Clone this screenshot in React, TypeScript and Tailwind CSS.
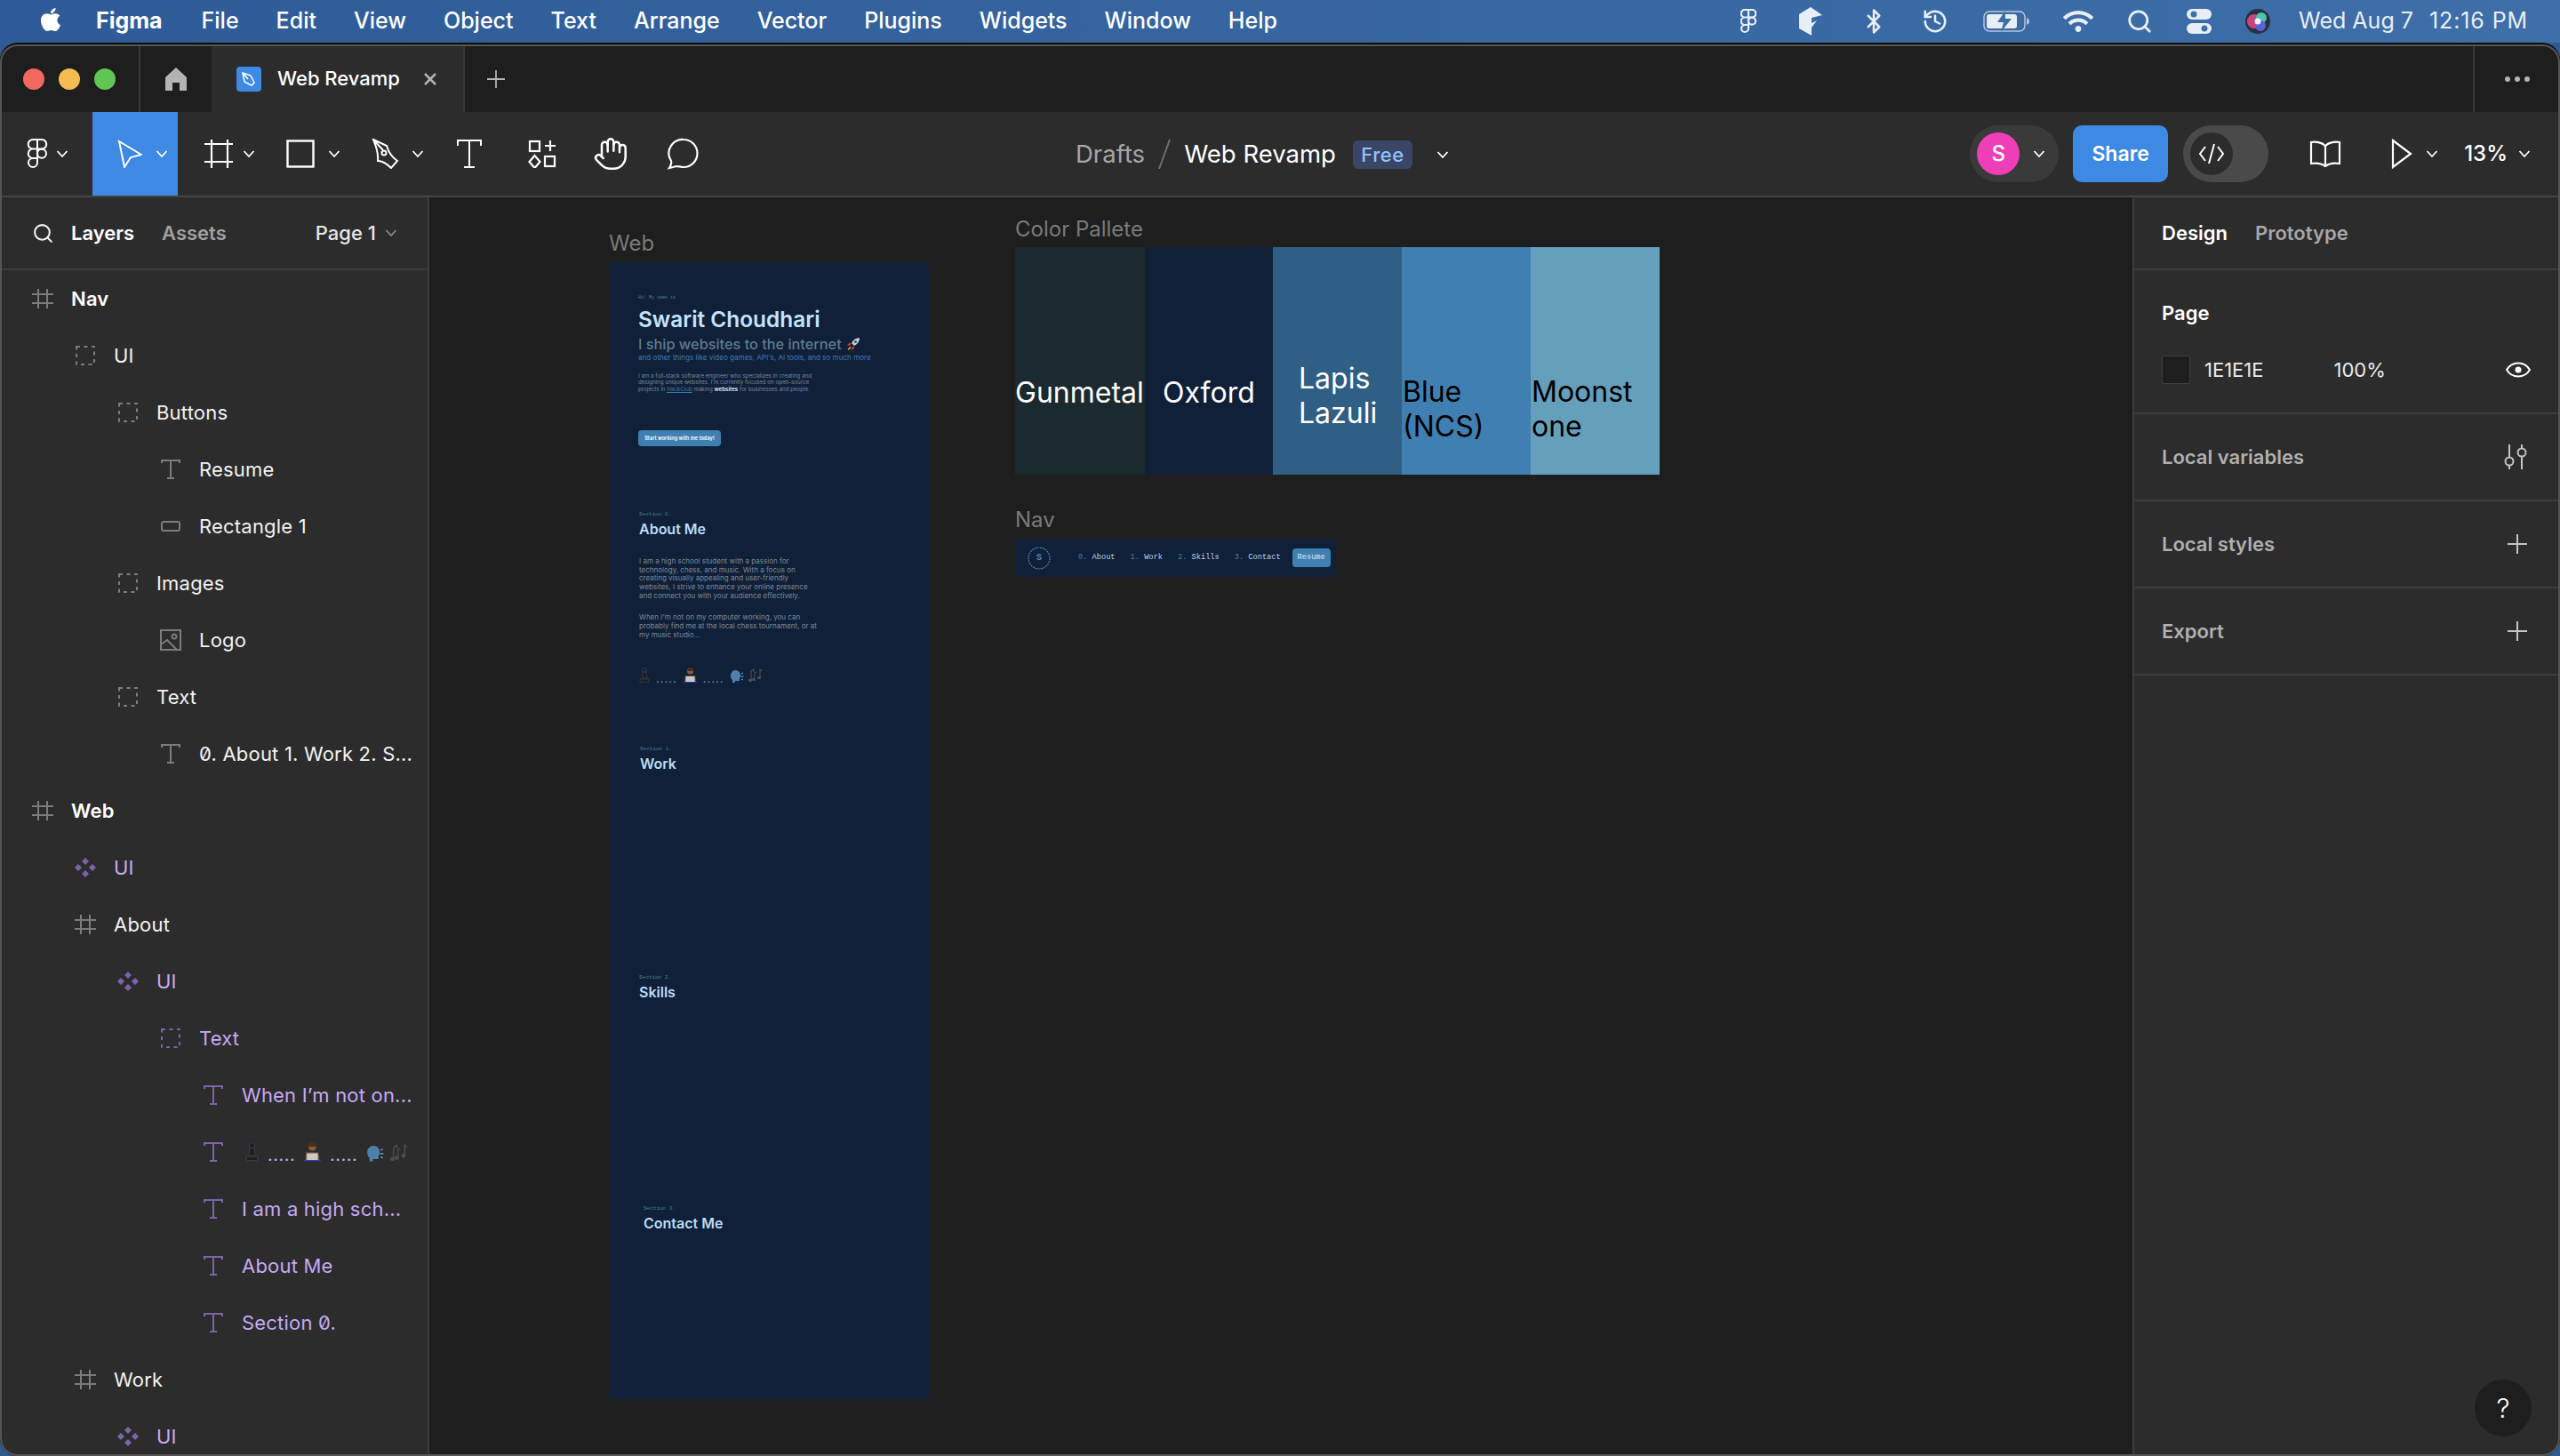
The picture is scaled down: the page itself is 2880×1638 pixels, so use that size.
import { Bluetooth, Hand, History, Search } from 'lucide-react';
import { FaApple, FaWifi } from 'react-icons/fa';

const INTER = "font-[family-name:Inter,sans-serif]";
const MONO = "font-[family-name:'Liberation_Mono',monospace]";

const MENUS = ['File', 'Edit', 'View', 'Object', 'Text', 'Arrange', 'Vector', 'Plugins', 'Widgets', 'Window', 'Help'];

type LayerIcon = 'frame' | 'group' | 'text' | 'rect' | 'image' | 'component';
type Layer = { depth: number; icon: LayerIcon; label?: string; tone?: 'bold' | 'purple'; emoji?: boolean };

const LAYERS: Layer[] = [
  { depth: 0, icon: 'frame', label: 'Nav', tone: 'bold' },
  { depth: 1, icon: 'group', label: 'UI' },
  { depth: 2, icon: 'group', label: 'Buttons' },
  { depth: 3, icon: 'text', label: 'Resume' },
  { depth: 3, icon: 'rect', label: 'Rectangle 1' },
  { depth: 2, icon: 'group', label: 'Images' },
  { depth: 3, icon: 'image', label: 'Logo' },
  { depth: 2, icon: 'group', label: 'Text' },
  { depth: 3, icon: 'text', label: '0. About 1. Work 2. S...' },
  { depth: 0, icon: 'frame', label: 'Web', tone: 'bold' },
  { depth: 1, icon: 'component', label: 'UI', tone: 'purple' },
  { depth: 1, icon: 'frame', label: 'About' },
  { depth: 2, icon: 'component', label: 'UI', tone: 'purple' },
  { depth: 3, icon: 'group', label: 'Text', tone: 'purple' },
  { depth: 4, icon: 'text', label: 'When I’m not on...', tone: 'purple' },
  { depth: 4, icon: 'text', tone: 'purple', emoji: true },
  { depth: 4, icon: 'text', label: 'I am a high sch...', tone: 'purple' },
  { depth: 4, icon: 'text', label: 'About Me', tone: 'purple' },
  { depth: 4, icon: 'text', label: 'Section 0.', tone: 'purple' },
  { depth: 1, icon: 'frame', label: 'Work' },
  { depth: 2, icon: 'component', label: 'UI', tone: 'purple' },
];

const Chevron = ({ color = '#fff', className = '' }: { color?: string; className?: string }) => (
  <svg width="14" height="10" viewBox="0 0 14 10" fill="none" className={className}>
    <path d="M1.5 2 7 8l5.5-6" stroke={color} strokeWidth="1.8" />
  </svg>
);

const Plus = ({ size = 22, color = '#c4c4c4' }: { size?: number; color?: string }) => (
  <svg width={size} height={size} viewBox="0 0 22 22" fill="none">
    <path d="M11 0v22M0 11h22" stroke={color} strokeWidth="2" />
  </svg>
);

function LayerGlyph({ icon, purple }: { icon: LayerIcon; purple: boolean }) {
  const c = purple ? '#7d63a8' : '#7c7c7c';
  if (icon === 'frame')
    return (
      <svg width="24" height="22" viewBox="0 0 24 22" fill="none" stroke={c} strokeWidth="2">
        <path d="M7 0v22M17 0v22M0 6h24M0 16h24" />
      </svg>
    );
  if (icon === 'group')
    return (
      <svg width="22" height="22" viewBox="0 0 22 22" fill="none" stroke={c} strokeWidth="2" strokeDasharray="4 4.5">
        <rect x="1" y="1" width="20" height="20" />
      </svg>
    );
  if (icon === 'text')
    return (
      <svg width="22" height="22" viewBox="0 0 22 22" fill="none" stroke={c} strokeWidth="2">
        <path d="M1 4V1h20v3M11 1v20M7 21h8" />
      </svg>
    );
  if (icon === 'rect')
    return (
      <svg width="22" height="12" viewBox="0 0 22 12" fill="none" stroke={c} strokeWidth="2">
        <rect x="1" y="1" width="20" height="10" rx="2" />
      </svg>
    );
  if (icon === 'image')
    return (
      <svg width="24" height="24" viewBox="0 0 24 24" fill="none" stroke={c} strokeWidth="2">
        <rect x="1" y="1" width="22" height="22" />
        <circle cx="16" cy="8" r="2.5" />
        <path d="M1 17l7-5 11 11" />
      </svg>
    );
  return (
    <svg width="24" height="22" viewBox="0 0 24 22" fill={c}>
      <path d="M12 0l4 4-4 4-4-4zM12 14l4 4-4 4-4-4zM4 7l4 4-4 4-4-4zM20 7l4 4-4 4-4-4z" />
    </svg>
  );
}

const Pawn = ({ s }: { s: number }) => (
  <svg width={12 * s} height={17 * s} viewBox="0 0 12 17" fill="#1c2024" stroke="#4a4f55" strokeWidth="0.5">
    <circle cx="6" cy="3" r="2.5" />
    <path d="M4 5h4l1 7H3zM1 13h10v3.5H1z" />
  </svg>
);

const Coder = ({ s }: { s: number }) => (
  <svg width={15 * s} height={17 * s} viewBox="0 0 15 17">
    <circle cx="7.5" cy="4" r="3.6" fill="#8a5a3a" />
    <path d="M3.5 4a4 4 0 0 1 8 0z" fill="#4a2f20" />
    <path d="M2 9h11l1 7H1z" fill="#7a5238" />
    <rect x="2.5" y="10" width="10" height="6" fill="#c9c9c9" />
    <rect x="0" y="16" width="15" height="1" fill="#2b3fb5" />
  </svg>
);

const Speaker = ({ s }: { s: number }) => (
  <svg width={16 * s} height={14 * s} viewBox="0 0 16 14">
    <path d="M1 6a5.5 5.5 0 0 1 11-1l.5 3-1.500 .5V12H6v2H3v-3C1.500 10 1 8 1 6z" fill="#4f80ad" />
    <path d="M13 4l2-1M13 7h2.500M13 10l2 1" stroke="#8fb2cf" strokeWidth="1" />
  </svg>
);

const Notes = ({ s }: { s: number }) => (
  <svg width={16 * s} height={16 * s} viewBox="0 0 16 16" fill="none" stroke="#4a5058" strokeWidth="1.100">
    <path d="M3 13V3l3-2v3M7 12V5l2-1" />
    <ellipse cx="2" cy="13.500" rx="1.500" ry="1.200" fill="#4a5058" />
    <ellipse cx="6" cy="12.500" rx="1.500" ry="1.200" fill="#4a5058" />
    <path d="M13 10V1l2 2" />
    <ellipse cx="12" cy="10.500" rx="1.500" ry="1.200" fill="#4a5058" />
  </svg>
);

const Rocket = () => (
  <svg width="16" height="16" viewBox="0 0 16 16" className="ml-[5px]">
    <path d="M15 1c-4 0-7 2-9 6l3 3c4-2 6-5 6-9z" fill="#c9ced6" />
    <circle cx="10.500" cy="5.500" r="1.500" fill="#35506e" />
    <path d="M6 7H3L1 9.500l3 .5zM9 10v3l-2.500 2-.5-3z" fill="#c8382f" />
    <path d="M4.500 11C3 12 2 13.500 1.500 15c1.500-.5 3-1.500 4-3z" fill="#f3b62f" />
  </svg>
);

function EmojiLine({ s, dots }: { s: number; dots: string }) {
  return (
    <div className="flex items-end">
      <Pawn s={s} />
      <span className={dots}>.....</span>
      <Coder s={s} />
      <span className={dots}>.....</span>
      <Speaker s={s} />
      <span style={{ width: 5 * s }} />
      <Notes s={s} />
    </div>
  );
}

function LayerRow({ layer }: { layer: Layer }) {
  const purple = layer.tone === 'purple';
  const color = purple ? 'text-[#c5a9f3]' : 'text-[#f2f2f2]';
  return (
    <div className="flex h-[64px] shrink-0 items-center" style={{ paddingLeft: 32 + layer.depth * 48 }}>
      <span className="flex w-[32px] shrink-0 justify-center">
        <LayerGlyph icon={layer.icon} purple={purple} />
      </span>
      {layer.emoji ? (
        <span className="ml-[20px]">
          <EmojiLine s={1.25} dots="mx-[10px] text-[20px] leading-[16px] tracking-[0.5px] text-[#c5a9f3]" />
        </span>
      ) : (
        <span
          className={`ml-[16px] whitespace-nowrap text-[22px] tracking-[0.2px] slashed-zero ${color} ${
            layer.tone === 'bold' ? 'font-semibold text-white' : ''
          }`}
        >
          {layer.label}
        </span>
      )}
    </div>
  );
}

function FrameSection({ n, title, className }: { n: number; title: string; className: string }) {
  return (
    <div className={className}>
      <p className={`${MONO} h-[8px] text-[6px] leading-[8px] slashed-zero text-[#4d7c9c]`}>Section {n}.</p>
      <p className="mt-[2px] h-[20px] text-[16px] font-semibold leading-[20px] text-[#bcdcf5]">{title}</p>
    </div>
  );
}

function WebFrame() {
  return (
    <div className={`absolute left-[202px] top-[73px] flex h-[1279px] w-[360px] flex-col bg-[#0f2038] ${INTER}`}>
      <div className="pl-[33px] pt-[36px]">
        <p className={`${MONO} h-[8px] text-[5px] leading-[8px] text-[#4d7c9c]`}>Hi! My name is</p>
        <p className="mt-[6px] h-[28px] text-[24.400px] font-semibold leading-[28px] text-[#c5e3ff]">Swarit Choudhari</p>
        <div className="mt-[5px] flex h-[18px] items-center whitespace-nowrap text-[16.300px] font-medium leading-[18px] text-[#607a91]">
          I ship websites to the internet
          <Rocket />
        </div>
        <p className="h-[12px] whitespace-nowrap text-[8.100px] leading-[12px] text-[#4377b0]">
          and other things like video games, API's, AI tools, and so much more
        </p>
        <p className="mt-[11px] w-[200px] text-[6.2px] leading-[7.3px] text-[#7c8999]">
          I am a full-stack software engineer who specializes in creating and designing unique websites. I'm currently
          focused on open-source projects in <span className="text-[#3f7fb1] underline">HackClub</span> making{' '}
          <span className="font-semibold text-[#e4eef6]">websites</span> for businesses and people.
        </p>
        <div className="mt-[43px] flex h-[18px] w-[93px] items-center justify-center rounded-[4px] bg-[#3f7fb1] text-[5.600px] font-bold text-[#e8f2fa]">
          Start working with me today!
        </div>
      </div>

      <div className="pl-[34px]">
        <FrameSection n={0} title="About Me" className="mt-[73px]" />
        <p className="mt-[22px] w-[230px] text-[8px] leading-[9.7px] text-[#7c8999]">
          I am a high school student with a passion for
          <br />
          technology, chess, and music. With a focus on
          <br />
          creating visually appealing and user-friendly
          <br />
          websites, I strive to enhance your online presence
          <br />
          and connect you with your audience effectively.
        </p>
        <p className="mt-[15px] w-[230px] text-[8px] leading-[9.7px] text-[#7c8999]">
          When I'm not on my computer working, you can
          <br />
          probably find me at the local chess tournament, or at
          <br />
          my music studio...
        </p>
        <div className="mt-[31px]">
          <EmojiLine s={1} dots="mx-[7px] text-[13px] leading-[10px] tracking-[1px] text-[#7c8999]" />
        </div>
      </div>

      <FrameSection n={1} title="Work" className="mt-[71px] pl-[35px]" />
      <FrameSection n={2} title="Skills" className="mt-[227px] pl-[34px]" />
      <FrameSection n={3} title="Contact Me" className="mt-[230px] pl-[39px]" />
    </div>
  );
}

function NavFrame() {
  const items: [string, string][] = [
    ['0.', 'About'],
    ['1.', 'Work'],
    ['2.', 'Skills'],
    ['3.', 'Contact'],
  ];
  return (
    <div className={`absolute left-[659px] top-[384px] flex h-[43px] w-[360px] items-center bg-[#0f2038] pl-[14px] ${MONO}`}>
      <div className="relative mr-[14px] flex h-[26px] w-[26px] items-center justify-center text-[10px] font-bold text-[#4f86b0]">
        <svg width="26" height="26" viewBox="0 0 26 26" fill="none" className="absolute inset-0">
          <circle cx="13" cy="13" r="12" stroke="#4f86b0" strokeWidth="1.200" strokeDasharray="2 1" />
        </svg>
        S
      </div>
      {items.map(([num, label]) => (
        <span key={num} className="ml-[17px] whitespace-nowrap text-[8.670px] slashed-zero text-[#b5d3e8]">
          <span className="text-[#3f7fb1]">{num}</span> {label}
        </span>
      ))}
      <span className="ml-[13px] flex h-[21px] w-[43px] items-center justify-center rounded-[4px] bg-[#3f7fb1] text-[8.670px] text-[#dcecf7]">
        Resume
      </span>
    </div>
  );
}

function Palette() {
  return (
    <div className={`absolute left-[659px] top-[56px] flex h-[256px] w-[725px] text-[32px] leading-[39px] ${INTER}`}>
      <div className="h-full w-[146px] bg-[#1b2a2f] pt-[144px] text-white">Gunmetal</div>
      <div className="h-full w-[144px] bg-[#0f2038] pl-[20px] pt-[144px] text-white">Oxford</div>
      <div className="h-full w-[145px] bg-[#2f5f85] pl-[29px] pt-[128px] text-white">
        Lapis
        <br />
        Lazuli
      </div>
      <div className="h-full w-[145px] bg-[#3f7fb1] pl-[1px] pt-[143px] text-black">
        Blue
        <br />
        (NCS)
      </div>
      <div className="h-full w-[145px] bg-[#659fbc] pl-[1px] pt-[143px] text-black">
        Moonst
        <br />
        one
      </div>
    </div>
  );
}

function MenuBar() {
  return (
    <div className="flex h-[48px] shrink-0 items-center bg-gradient-to-r from-[#2e5b97] to-[#3e6fa9] pl-[42px] pr-[36px] text-[25px] text-white">
      <FaApple size={30} className="mb-[4px]" />
      <span className="ml-[36px] font-bold">Figma</span>
      <div className="ml-[44px] flex gap-[42px] font-medium">
        {MENUS.map((m) => (
          <span key={m}>{m}</span>
        ))}
      </div>
      <div className="ml-auto flex items-center text-[#e8eef6]">
        <svg width="18" height="28" viewBox="0 0 18 28" fill="none" stroke="currentColor" strokeWidth="2.200">
          <path d="M9 1H5a4 4 0 0 0 0 8.500h4zM9 1h4a4 4 0 0 1 0 8.500H9zM9 9.500H5a4 4 0 0 0 0 8.500h4zM9 18H5a4 4 0 1 0 4 4z" />
          <circle cx="13" cy="13.700" r="4" />
        </svg>
        <svg width="28" height="32" viewBox="0 0 28 32" className="ml-[47px]" fill="currentColor">
          <path d="M1 8 14 0l13 9-12 3v6l6-3-6 8v9L1 24z" />
        </svg>
        <Bluetooth size={30} strokeWidth={2} className="ml-[42px]" />
        <History size={30} strokeWidth={2} className="ml-[39px]" />
        <svg width="52" height="24" viewBox="0 0 52 24" className="ml-[39px]" fill="none">
          <rect x="1" y="1" width="46" height="22" rx="6" stroke="currentColor" strokeWidth="1.500" opacity="0.7" />
          <rect x="4" y="4" width="34" height="16" rx="3" fill="currentColor" />
          <path d="M25 0l-9 13h7l-3 11 12-15h-7z" fill="#3e6fa9" />
          <path d="M49 8v8c2-1 3-2 3-4s-1-3-3-4z" fill="currentColor" opacity="0.7" />
        </svg>
        <FaWifi size={34} className="ml-[38px]" />
        <Search size={30} strokeWidth={2.200} className="ml-[37px]" />
        <svg width="28" height="28" viewBox="0 0 28 28" className="ml-[38px]">
          <rect x="0" y="0" width="28" height="12" rx="6" fill="currentColor" />
          <circle cx="8" cy="6" r="3.500" fill="#3e6fa9" />
          <rect x="0" y="16" width="28" height="12" rx="6" fill="currentColor" />
          <circle cx="20" cy="22" r="3.500" fill="#3e6fa9" />
        </svg>
        <svg width="28" height="28" viewBox="0 0 28 28" className="ml-[38px]">
          <circle cx="14" cy="14" r="14" fill="#28323f" />
          <circle cx="10" cy="14" r="8" fill="#c9447e" />
          <circle cx="18" cy="10" r="6" fill="#4ec3b0" />
          <circle cx="17" cy="19" r="6" fill="#5b62d6" />
          <circle cx="14" cy="14" r="3.500" fill="#f2f2f2" />
        </svg>
        <span className="ml-[32px] whitespace-nowrap">Wed Aug 7</span>
        <span className="ml-[18px] whitespace-nowrap tracking-[0.9px]">12:16 PM</span>
      </div>
    </div>
  );
}

function TabBar() {
  return (
    <div className="flex h-[76px] shrink-0 items-stretch bg-[#1e1e1e] pt-[1px]">
      <div className="flex w-[158px] items-center gap-[16px] border-r-2 border-[#383838] pl-[26px]">
        <span className="h-[24px] w-[24px] rounded-full bg-[#f0695f]" />
        <span className="h-[24px] w-[24px] rounded-full bg-[#f5bd4f]" />
        <span className="h-[24px] w-[24px] rounded-full bg-[#61c554]" />
      </div>
      <div className="flex w-[80px] items-center justify-center">
        <svg width="26" height="26" viewBox="0 0 26 26" fill="#b3b3b3">
          <path d="M13 0 25 11v15h-8v-9H9v9H1V11z" />
        </svg>
      </div>
      <div className="flex w-[285px] items-center border-r-2 border-[#383838] bg-[#2c2c2c] pl-[28px]">
        <span className="flex h-[28px] w-[28px] items-center justify-center rounded-[4px] bg-[#3d89e3]">
          <svg width="18" height="18" viewBox="0 0 18 18" fill="none" stroke="#fff" strokeWidth="1.500">
            <path d="M2 2l9 3 4 8-3 3-8-4zM2 2l6 7" />
          </svg>
        </span>
        <span className="ml-[18px] whitespace-nowrap text-[22px] font-medium text-white">Web Revamp</span>
        <svg width="16" height="16" viewBox="0 0 16 16" className="ml-[26px]" stroke="#b3b3b3" strokeWidth="2.500">
          <path d="M2 2l12 12M14 2 2 14" />
        </svg>
      </div>
      <div className="ml-[25px] flex items-center">
        <Plus size={20} color="#b3b3b3" />
      </div>
      <div className="ml-auto flex w-[98px] items-center justify-center gap-[5px] border-l-2 border-[#383838]">
        <span className="h-[6px] w-[6px] rounded-full bg-[#b3b3b3]" />
        <span className="h-[6px] w-[6px] rounded-full bg-[#b3b3b3]" />
        <span className="h-[6px] w-[6px] rounded-full bg-[#b3b3b3]" />
      </div>
    </div>
  );
}

function Toolbar() {
  return (
    <div className="relative flex h-[96px] shrink-0 items-stretch border-b-2 border-[#444] bg-[#2c2c2c]">
      <div className="flex items-center pl-[30px]">
        <svg width="24" height="34" viewBox="0 0 24 34" fill="none" stroke="#fff" strokeWidth="2">
          <path d="M12 1H7a5 5 0 0 0 0 10.500h5zM12 1h5a5 5 0 0 1 0 10.500h-5zM12 11.500H7a5 5 0 0 0 0 10.500h5zM12 22H7a5 5 0 1 0 5 5z" />
          <circle cx="17" cy="16.700" r="5" />
        </svg>
        <Chevron className="ml-[9px]" />
      </div>
      <div className="ml-[27px] flex w-[96px] items-center bg-[#3d89e3] pl-[28px]">
        <svg width="28" height="32" viewBox="0 0 28 32" fill="none" stroke="#fff" strokeWidth="2" strokeLinejoin="miter">
          <path d="M2 2l25 15-12 3-7 11z" />
        </svg>
        <Chevron className="ml-[15px]" />
      </div>
      <div className="ml-[30px] flex items-center">
        <svg width="32" height="32" viewBox="0 0 32 32" fill="none" stroke="#fff" strokeWidth="2.200">
          <path d="M8 0v32M26 0v32M0 5h32M0 25h32" />
        </svg>
        <Chevron className="ml-[11px]" />
      </div>
      <div className="ml-[35px] flex items-center">
        <svg width="32" height="32" viewBox="0 0 32 32" fill="none" stroke="#fff" strokeWidth="2.400">
          <rect x="1.500" y="1.500" width="29" height="29" />
        </svg>
        <Chevron className="ml-[15px]" />
      </div>
      <div className="ml-[35px] flex items-center">
        <svg width="32" height="34" viewBox="0 0 32 34" fill="none" stroke="#fff" strokeWidth="2">
          <path d="M2 1l15 7c2 7 6 13 12 17l-7 8c-5-5-11-8-15-8C8 16 5 8 2 1zM2 1l11 12" />
          <circle cx="14" cy="16" r="2.500" />
        </svg>
        <Chevron className="ml-[13px]" />
      </div>
      <div className="ml-[37px] flex items-center">
        <svg width="28" height="32" viewBox="0 0 28 32" fill="none" stroke="#fff" strokeWidth="2">
          <path d="M1 7V1h26v6M14 1v30M8 31h12" />
        </svg>
      </div>
      <div className="ml-[52px] flex items-center">
        <svg width="32" height="32" viewBox="0 0 32 32" fill="none" stroke="#fff" strokeWidth="2.200">
          <rect x="2" y="2" width="11" height="11" />
          <path d="M25 1v12M19 7h12" />
          <path d="M7.500 18l6 7-6 7-6-7z" />
          <rect x="19" y="19" width="11" height="11" />
        </svg>
      </div>
      <div className="ml-[41px] flex items-center">
        <Hand size={40} strokeWidth={1.500} color="#fff" />
      </div>
      <div className="ml-[43px] flex items-center">
        <svg width="36" height="36" viewBox="0 0 36 36" fill="none" stroke="#fff" strokeWidth="2.200">
          <path d="M19 2a15.500 15.500 0 0 1 0 31c-3 0-6-1-8-1l-8 2c2-3 3-5 2-8A15.500 15.500 0 0 1 19 2z" />
        </svg>
      </div>

      {/* file title, centred over the bar */}
      <div className="absolute left-[1210px] top-0 flex h-full items-center pt-[2px] text-[27.5px]">
        <span className="text-[#a6a6a6]">Drafts</span>
        <svg width="14" height="34" viewBox="0 0 14 34" className="ml-[15px]" stroke="#6f6f6f" strokeWidth="2">
          <path d="M13 0 1 33" />
        </svg>
        <span className="ml-[15px] text-white">Web Revamp</span>
        <span className="ml-[19px] flex h-[32px] w-[67px] items-center justify-center rounded-[6px] bg-[#3b4566] text-[22px] font-medium tracking-[0.5px] text-[#8cc4ff]">
          Free
        </span>
        <Chevron className="ml-[27px]" />
      </div>

      <div className="ml-auto flex items-center pr-[33px]">
        <div className="flex h-[64px] w-[100px] items-center rounded-[32px] bg-[#3a3a3a] pl-[8px]">
          <span className="flex h-[48px] w-[48px] items-center justify-center rounded-full bg-[#ee3fb8] text-[24px] font-medium text-white">
            S
          </span>
          <Chevron className="ml-[15px]" />
        </div>
        <div className="ml-[16px] flex h-[64px] w-[107px] items-center justify-center rounded-[10px] bg-[#3d89e3] text-[23px] font-semibold text-white">
          Share
        </div>
        <div className="ml-[17px] flex h-[64px] w-[96px] items-center rounded-[32px] bg-[#4a4a4a] pl-[8px]">
          <span className="flex h-[48px] w-[48px] items-center justify-center rounded-full bg-[#2c2c2c]">
            <svg width="30" height="24" viewBox="0 0 30 24" fill="none" stroke="#fff" strokeWidth="2">
              <path d="M8 4 2 12l6 8M22 4l6 8-6 8M18 1l-6 22" />
            </svg>
          </span>
        </div>
        <svg width="38" height="30" viewBox="0 0 38 30" className="ml-[45px]" fill="none" stroke="#fff" strokeWidth="2.200">
          <path d="M19 6C15 2 8 1 3 2v24c6-1 12 0 16 3 4-3 10-4 16-3V2c-5-1-12 0-16 4zM19 6v23" />
        </svg>
        <svg width="24" height="34" viewBox="0 0 24 34" className="ml-[55px]" fill="none" stroke="#fff" strokeWidth="2.200">
          <path d="M2 2l20 15L2 32z" />
        </svg>
        <Chevron className="ml-[15px]" />
        <span className="ml-[29px] text-[24px] font-medium text-white">13%</span>
        <Chevron className="ml-[12px]" />
      </div>
    </div>
  );
}

function LeftPanel() {
  return (
    <div className="flex w-[483px] shrink-0 flex-col overflow-hidden border-r-2 border-[#3c3c3c] bg-[#2c2c2c] text-[22px]">
      <div className="flex h-[82px] shrink-0 items-center border-b-2 border-[#3c3c3c] pl-[36px]">
        <Search size={25} color="#f2f2f2" strokeWidth={2} />
        <span className="ml-[19px] font-semibold text-white">Layers</span>
        <span className="ml-[31px] font-semibold text-[#a0a0a0]">Assets</span>
        <span className="ml-[100px] font-medium text-[#e6e6e6]">Page 1</span>
        <Chevron color="#8a8a8a" className="ml-[10px]" />
      </div>
      {LAYERS.map((l, i) => (
        <LayerRow key={i} layer={l} />
      ))}
    </div>
  );
}

function RightSection({ label, children }: { label: string; children: React.ReactNode }) {
  return (
    <div className="flex h-[98px] shrink-0 items-center justify-between border-b-2 border-[#3c3c3c] pl-[31px] pr-[37px]">
      <span className="text-[22px] font-semibold text-[#b0b0b0]">{label}</span>
      {children}
    </div>
  );
}

function RightPanel() {
  return (
    <div className="relative flex w-[481px] shrink-0 flex-col border-l-2 border-[#3c3c3c] bg-[#2c2c2c]">
      <div className="flex h-[82px] shrink-0 items-center border-b-2 border-[#3c3c3c] pl-[31px] text-[22px] font-semibold">
        <span className="text-white">Design</span>
        <span className="ml-[31px] text-[#a6a6a6]">Prototype</span>
      </div>
      <div className="h-[162px] shrink-0 border-b-2 border-[#3c3c3c] pl-[31px] pr-[33px] pt-[34px]">
        <p className="text-[22px] font-semibold leading-[28px] text-white">Page</p>
        <div className="mt-[34px] flex h-[32px] items-center text-[22px] text-[#ececec]">
          <span className="h-[32px] w-[32px] rounded-[2px] border border-[#3f3f3f] bg-[#1e1e1e]" />
          <span className="ml-[16px]">1E1E1E</span>
          <span className="ml-[79px]">100%</span>
          <svg width="28" height="18" viewBox="0 0 28 18" fill="none" className="ml-auto" stroke="#fff" strokeWidth="2">
            <path d="M1 9c6-10 20-10 26 0-6 10-20 10-26 0z" />
            <circle cx="14" cy="9" r="3.500" fill="#fff" stroke="none" />
          </svg>
        </div>
      </div>
      <RightSection label="Local variables">
        <svg width="26" height="28" viewBox="0 0 26 28" fill="none" stroke="#c4c4c4" strokeWidth="2">
          <path d="M6 0v14M6 24v4M20 0v4M20 14v14" />
          <circle cx="6" cy="19" r="4.500" />
          <circle cx="20" cy="9" r="4.500" />
        </svg>
      </RightSection>
      <RightSection label="Local styles">
        <Plus />
      </RightSection>
      <RightSection label="Export">
        <Plus />
      </RightSection>
      <div className="absolute left-[383px] top-[1330px] flex h-[64px] w-[64px] items-center justify-center rounded-full bg-[#1e1e1e] text-[30px] font-light text-white">
        ?
      </div>
    </div>
  );
}

function Canvas() {
  const label = 'absolute text-[24px] leading-[28px] text-[#7a7a7a]';
  return (
    <div className={`relative min-w-0 flex-1 overflow-hidden bg-[#1e1e1e] ${INTER}`}>
      <span className={`${label} left-[202px] top-[38px]`}>Web</span>
      <span className={`${label} left-[659px] top-[22px]`}>Color Pallete</span>
      <span className={`${label} left-[659px] top-[349px]`}>Nav</span>
      <WebFrame />
      <Palette />
      <NavFrame />
    </div>
  );
}

export default function App() {
  return (
    <div className={`flex h-[1638px] w-[2880px] flex-col overflow-hidden bg-[#2f5a92] ${INTER}`}>
      <MenuBar />
      <div className="relative flex min-h-0 flex-1 flex-col overflow-hidden rounded-[20px] border-t-2 border-[#0c0c0c] bg-[#2c2c2c]">
        <TabBar />
        <Toolbar />
        <div className="flex min-h-0 flex-1">
          <LeftPanel />
          <Canvas />
          <RightPanel />
        </div>
        <div className="pointer-events-none absolute inset-0 rounded-[20px] border-2 border-[#555]" />
      </div>
    </div>
  );
}
